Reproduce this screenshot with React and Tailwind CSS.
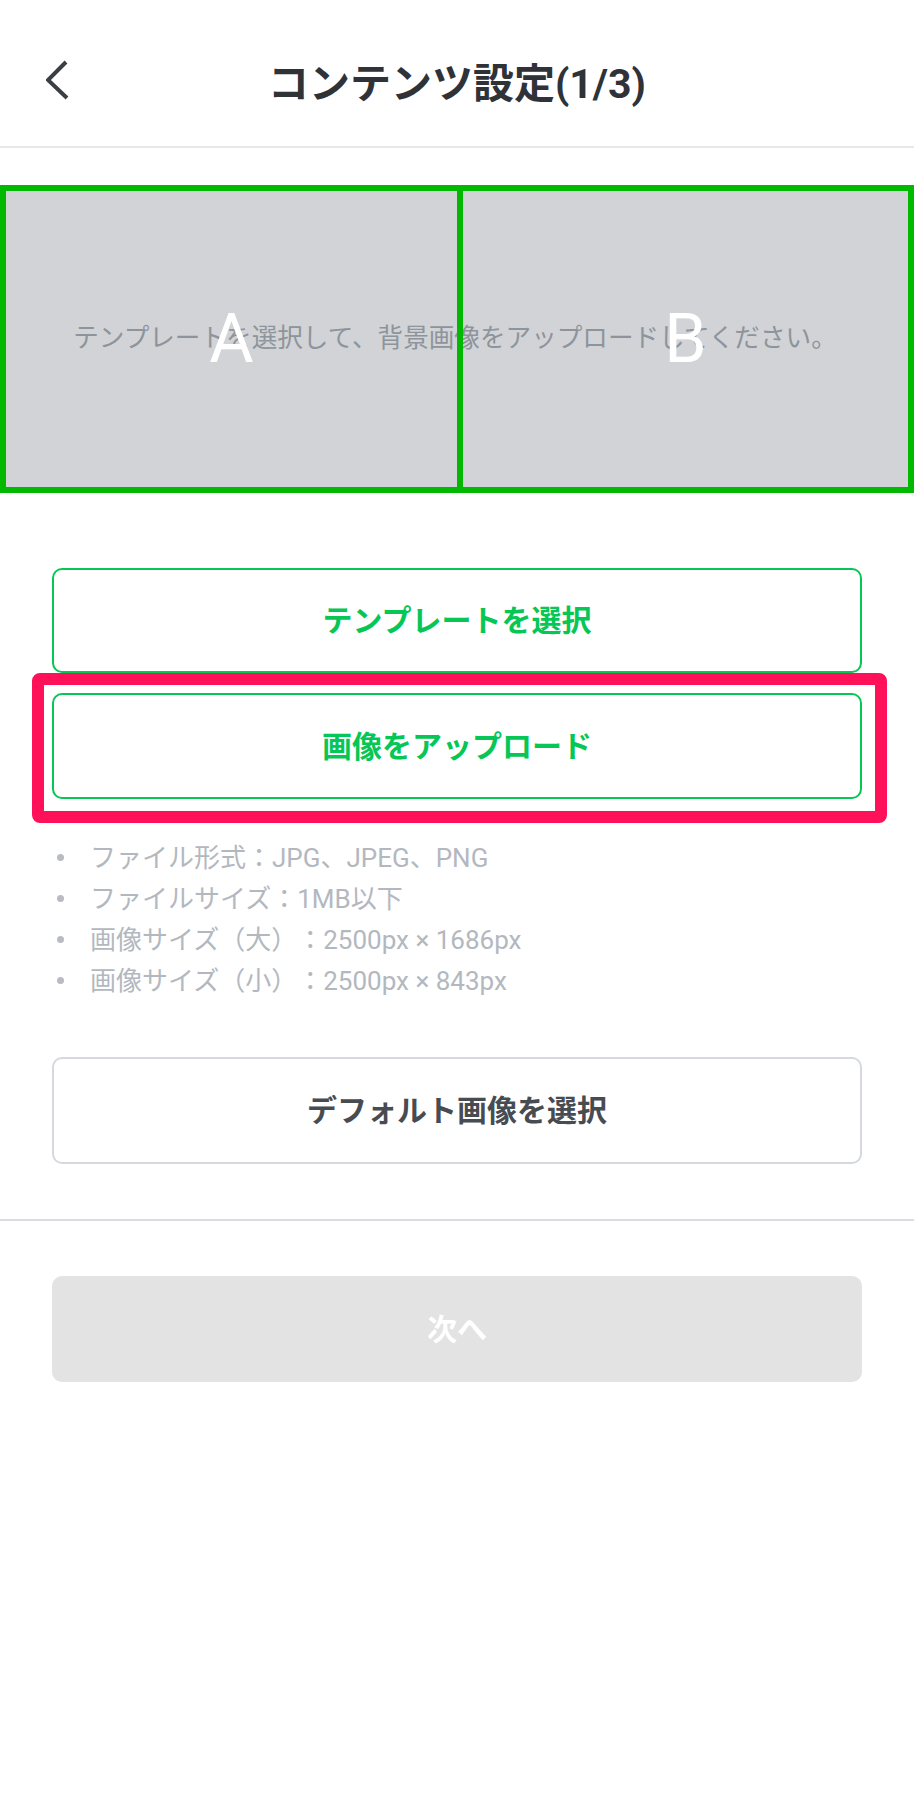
import React from "react";

const font = { fontFamily: '"Roboto", "Noto Sans CJK JP", sans-serif' };

function Chevron() {
  return (
    <svg width="30" height="44" viewBox="0 0 30 44" fill="none">
      <polyline
        points="20,3 2,21 21,39"
        stroke="#3b3f45"
        strokeWidth="4"
        strokeLinecap="butt"
        strokeLinejoin="miter"
      />
    </svg>
  );
}

const specs = [
  "ファイル形式：JPG、JPEG、PNG",
  "ファイルサイズ：1MB以下",
  "画像サイズ（大）：2500px × 1686px",
  "画像サイズ（小）：2500px × 843px",
];

export default function App() {
  return (
    <div
      className="w-[914px] min-h-[1814px] bg-white [text-spacing-trim:space-all]"
      style={font}
    >
      {/* Header */}
      <header className="pt-[22px] border-b-2 border-[#e6e8eb]">
        <div className="h-[124px] grid grid-cols-[1fr_auto_1fr] items-center">
          <div className="pl-[46px] flex items-center -mt-[6px]">
            <Chevron />
          </div>
          <h1 className="text-[41px] font-bold text-[#2f3338] leading-none">
            コンテンツ設定(1/3)
          </h1>
          <div />
        </div>
      </header>

      {/* Preview panel */}
      <div className="mt-[37px] relative h-[308px] border-[6px] border-[#00b900] bg-[#d1d3d6] grid grid-cols-2">
        <div className="absolute inset-0 flex items-center justify-center pr-[4px]">
          <span className="text-[25.6px] text-[#8e949b] leading-none whitespace-nowrap">
            テンプレートを選択して、背景画像をアップロードしてください。
          </span>
        </div>
        <div className="relative flex items-center justify-center">
          <span className="text-[68px] text-white leading-none font-normal">A</span>
        </div>
        <div className="relative flex items-center justify-center border-l-[6px] border-[#00b900]">
          <span className="text-[68px] text-white leading-none font-normal">B</span>
        </div>
      </div>

      {/* Actions */}
      <div className="px-[52px] mt-[75px] flex flex-col">
        <button className="h-[105px] w-full border-2 border-[#06c755] rounded-[10px] flex items-center justify-center text-[30px] font-bold text-[#06c755] bg-white">
          テンプレートを選択
        </button>

        <div className="relative mt-[20px]">
          <button className="h-[106px] w-full border-2 border-[#06c755] rounded-[10px] flex items-center justify-center text-[30px] font-bold text-[#06c755] bg-white">
            画像をアップロード
          </button>
          <div className="absolute -left-[20px] -top-[20px] -right-[25px] -bottom-[24px] border-[12px] border-[#ff1159] rounded-[8px] pointer-events-none" />
        </div>

        <ul className="mt-[38px] flex flex-col">
          {specs.map((s) => (
            <li
              key={s}
              className="h-[41px] flex items-center text-[26px] text-[#b3b8bf] leading-none"
            >
              <span className="ml-[5px] w-[7px] h-[7px] rounded-full bg-[#b8bcc2] shrink-0" />
              <span className="ml-[26px]">{s}</span>
            </li>
          ))}
        </ul>

        <button className="mt-[56px] h-[107px] w-full border-2 border-[#d5d8dd] rounded-[10px] flex items-center justify-center text-[30px] font-bold text-[#474c52] bg-white">
          デフォルト画像を選択
        </button>
      </div>

      <div className="mt-[55px] h-[2px] bg-[#d9dce0]" />

      <div className="px-[52px] mt-[55px]">
        <button className="h-[106px] w-full rounded-[10px] bg-[#e3e3e3] flex items-center justify-center text-[30px] font-bold text-white">
          次へ
        </button>
      </div>
    </div>
  );
}
